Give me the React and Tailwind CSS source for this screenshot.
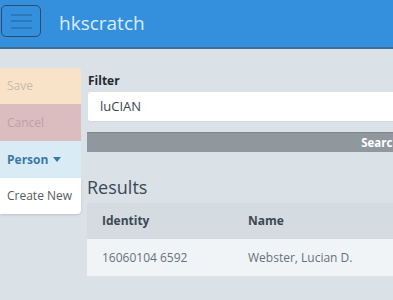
import React from "react";

export default function App() {
  return (
    <div
      className="w-[393px] h-[300px] overflow-hidden bg-[#dae1e7]"
      style={{ fontFamily: '"Open Sans", "Liberation Sans", sans-serif' }}
    >
      <header className="h-[49px] bg-[#3490dc] border-b-2 border-[#3f6f97] flex items-start">
        <button className="mt-[5px] ml-[1px] w-[40px] h-[32px] rounded-[5px] border-[1.5px] border-[#2e4d6e] flex flex-col items-center justify-center gap-[4.5px]">
          <span className="block w-[21px] h-[2px] bg-[#2f78b8]" />
          <span className="block w-[21px] h-[2px] bg-[#2f78b8]" />
          <span className="block w-[21px] h-[2px] bg-[#2f78b8]" />
        </button>
        <div className="ml-[18px] mt-[10px] text-[19px] leading-[26px] text-[#dcecfa]">hkscratch</div>
      </header>

      <div className="flex">
        <nav className="w-[81px] mt-[19px] flex flex-col shrink-0 text-[12px]">
          <div className="h-[36px] bg-[#f8e3c8] rounded-tr-[4px] flex items-center pl-[7px] text-[#c9bba9]">Save</div>
          <div className="h-[37px] bg-[#dcbdbf] flex items-center pl-[7px] text-[#baa2a4]">Cancel</div>
          <div className="h-[37px] bg-[#d9ecf6] flex items-center pl-[7px] font-bold text-[#3a79a6]">
            Person
            <svg className="ml-[5px]" width="8" height="5" viewBox="0 0 8 5">
              <path d="M0 0h8L4 5z" fill="#3a79a6" />
            </svg>
          </div>
          <div className="h-[36px] bg-white rounded-br-[4px] shadow-sm flex items-center pl-[7px] text-[#555b60]">Create New</div>
        </nav>

        <main className="ml-[6px] w-[321px] shrink-0">
          <div className="mt-[24px] text-[12px] leading-[16px] font-bold text-[#22292f] pl-[1px]">Filter</div>
          <div className="mt-[3px] ml-[1px] h-[30px] bg-white rounded-[3px] border-b border-[#cfd6dc] flex items-center pl-[12px] text-[13px] text-[#3d4852]">
            luCIAN
          </div>
          <div className="mt-[10px] h-[20px] bg-[#8f989f] border-t border-[#7f878e] flex items-center justify-end pr-[8px] text-[11.5px] font-bold text-white">
            Search
          </div>
          <div className="mt-[23px] text-[18px] leading-[24px] text-[#3d4852]">Results</div>
          <div className="mt-[4px] text-[12px]">
            <div className="h-[36px] bg-[#d4dbe1] flex items-center font-bold text-[#3d4852]">
              <div className="pl-[15px] w-[161px]">Identity</div>
              <div>Name</div>
            </div>
            <div className="h-[37px] bg-[#f1f4f7] flex items-center text-[#66717b]">
              <div className="pl-[15px] w-[161px]">16060104 6592</div>
              <div>Webster, Lucian D.</div>
            </div>
          </div>
        </main>
      </div>
    </div>
  );
}
